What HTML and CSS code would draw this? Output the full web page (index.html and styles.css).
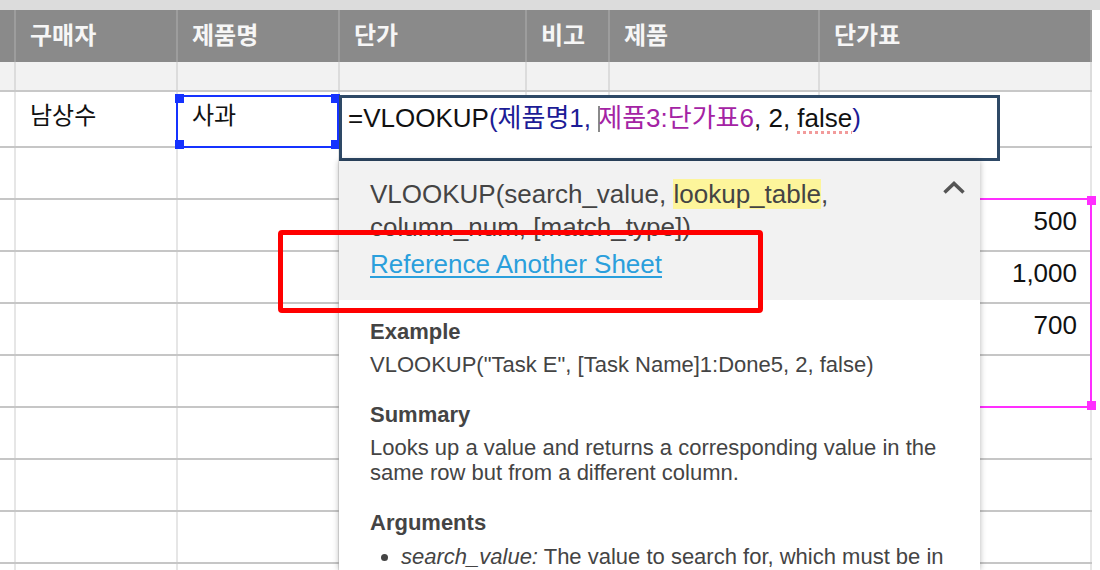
FILE: index.html
```html
<!DOCTYPE html>
<html lang="ko">
<head>
    <meta charset="UTF-8">
    <title>시트 - VLOOKUP</title>
    <link rel="stylesheet" href="styles.css">
</head>
<body>
    <div class="topbar"></div>

    <div class="sheet">
        <div class="row head">
            <div class="cell"></div>
            <div class="cell">구매자</div>
            <div class="cell">제품명</div>
            <div class="cell">단가</div>
            <div class="cell">비고</div>
            <div class="cell">제품</div>
            <div class="cell">단가표</div>
        </div>
        <div class="row sub">
            <div class="cell"></div><div class="cell"></div><div class="cell"></div><div class="cell"></div><div class="cell"></div><div class="cell"></div><div class="cell"></div>
        </div>
        <div class="row first">
            <div class="cell"></div>
            <div class="cell">남상수</div>
            <div class="cell selected">사과
                <span class="sel-frame">
                    <i class="handle tl"></i><i class="handle tr"></i><i class="handle bl"></i><i class="handle br"></i>
                </span>
            </div>
            <div class="cell"></div><div class="cell"></div><div class="cell"></div><div class="cell"></div>
        </div>
        <div class="row">
            <div class="cell"></div><div class="cell"></div><div class="cell"></div><div class="cell"></div><div class="cell"></div><div class="cell"></div><div class="cell"></div>
        </div>
        <div class="row">
            <div class="cell"></div><div class="cell"></div><div class="cell"></div><div class="cell"></div><div class="cell"></div><div class="cell"></div><div class="cell num">500</div>
        </div>
        <div class="row">
            <div class="cell"></div><div class="cell"></div><div class="cell"></div><div class="cell"></div><div class="cell"></div><div class="cell"></div><div class="cell num">1,000</div>
        </div>
        <div class="row">
            <div class="cell"></div><div class="cell"></div><div class="cell"></div><div class="cell"></div><div class="cell"></div><div class="cell"></div><div class="cell num">700</div>
        </div>
        <div class="row">
            <div class="cell"></div><div class="cell"></div><div class="cell"></div><div class="cell"></div><div class="cell"></div><div class="cell"></div><div class="cell"></div>
        </div>
        <div class="row">
            <div class="cell"></div><div class="cell"></div><div class="cell"></div><div class="cell"></div><div class="cell"></div><div class="cell"></div><div class="cell"></div>
        </div>
        <div class="row">
            <div class="cell"></div><div class="cell"></div><div class="cell"></div><div class="cell"></div><div class="cell"></div><div class="cell"></div><div class="cell"></div>
        </div>
        <div class="row">
            <div class="cell"></div><div class="cell"></div><div class="cell"></div><div class="cell"></div><div class="cell"></div><div class="cell"></div><div class="cell"></div>
        </div>
        <div class="row">
            <div class="cell"></div><div class="cell"></div><div class="cell"></div><div class="cell"></div><div class="cell"></div><div class="cell"></div><div class="cell"></div>
        </div>
        <div class="row">
            <div class="cell"></div><div class="cell"></div><div class="cell"></div><div class="cell"></div><div class="cell"></div><div class="cell"></div><div class="cell"></div>
        </div>

        <!-- referenced range 제품3:단가표6 -->
        <div class="range-box">
            <i class="handle rt"></i><i class="handle rb"></i>
        </div>

        <!-- in-cell formula editor -->
        <div class="formula-editor">=VLOOKUP<span class="ref-a">(제품명1, </span><span class="caret"></span><span class="ref-b">제품3:단가표6</span>, 2, <span class="misspelled">false</span><span class="ref-a">)</span></div>

        <!-- function help -->
        <div class="help-panel">
            <div class="help-top">
                <div class="signature">VLOOKUP(search_value, <mark>lookup_table</mark>, column_num, [match_type])</div>
                <svg class="collapse" width="24" height="14" viewBox="0 0 24 14">
                    <polyline points="2.5,11.5 12,2.5 21.5,11.5" fill="none" stroke="#555" stroke-width="3.5"/>
                </svg>
                <a class="sheet-link" href="#">Reference Another Sheet</a>
            </div>
            <div class="help-body">
                <h4>Example</h4>
                <p>VLOOKUP("Task E", [Task Name]1:Done5, 2, false)</p>
                <h4>Summary</h4>
                <p>Looks up a value and returns a corresponding value in the same row but from a different column.</p>
                <h4>Arguments</h4>
                <ul>
                    <li><em>search_value:</em> The value to search for, which must be in</li>
                </ul>
            </div>
        </div>

        <div class="callout"></div>
    </div>
</body>
</html>
```

FILE: styles.css
```css
* {
    margin: 0;
    padding: 0;
    box-sizing: border-box;
}

body {
    font-family: 'Liberation Sans', 'Noto Sans CJK KR', sans-serif;
    background: #ffffff;
    color: #111;
    width: 1100px;
    height: 570px;
    overflow: hidden;
}

.topbar {
    height: 10px;
    background: #dcdcdc;
}

.sheet {
    position: relative;
}

/* grid rows */
.row {
    display: grid;
    grid-template-columns: 16px 162px 162px 187px 83px 210px 272px;
    width: 1092px;
    height: 52px;
    border-bottom: 2px solid #c6c6c6;
}

.cell {
    border-right: 2px solid #e6e6e6;
    padding: 9px 14px 0;
    font-size: 24px;
    line-height: 28px;
    white-space: nowrap;
    min-width: 0;
}

/* row-number gutter */
.cell:first-child {
    padding: 0;
}

.row.head {
    height: 52px;
    background: #8a8a8a;
    border-bottom: none;
}

.row.head .cell {
    border-right-color: #9d9d9d;
    color: #f6f6f6;
    font-weight: bold;
    padding-top: 0;
    display: flex;
    align-items: center;
}

.row.sub {
    height: 30px;
    background: #f2f2f2;
    border-bottom-color: #c8c8c8;
}

.row.sub .cell {
    border-right-color: #dcdcdc;
}

.row.first {
    height: 56px;
}

.row.first .cell {
    padding-top: 10px;
}

.cell.num {
    text-align: right;
    padding-right: 13px;
    padding-top: 7px;
    font-size: 26px;
}

/* selected cell */
.cell.selected {
    position: relative;
}

.sel-frame {
    position: absolute;
    left: -2px;
    top: 3px;
    width: 163px;
    height: 53px;
    border: 2px solid #1532ff;
    z-index: 2;
}

.handle {
    position: absolute;
    width: 9px;
    height: 9px;
    background: #1532ff;
}

.sel-frame .tl { left: -3px; top: -3px; }
.sel-frame .tr { right: -3px; top: -3px; }
.sel-frame .bl { left: -3px; bottom: -3px; }
.sel-frame .br { right: -3px; bottom: -3px; }

/* referenced range */
.range-box {
    position: absolute;
    left: 818px;
    top: 188px;
    width: 274px;
    height: 210px;
    border: 2px solid #ff2eff;
    z-index: 3;
}

.range-box .handle {
    background: #ff2eff;
}

.range-box .rt { right: -6px; top: -4px; }
.range-box .rb { right: -6px; bottom: -4px; }

/* formula editor */
.formula-editor {
    position: absolute;
    left: 339px;
    top: 85px;
    width: 661px;
    height: 66px;
    border: 3px solid #2e4966;
    background: #fff;
    padding: 5px 6px;
    font-size: 26px;
    line-height: 30px;
    color: #111;
    white-space: nowrap;
    z-index: 4;
}

.ref-a {
    color: #1c1c96;
}

.ref-b {
    color: #a423a4;
}

.caret {
    display: inline-block;
    width: 2px;
    height: 26px;
    margin-right: -2px;
    vertical-align: -5px;
    background: #8a8a8a;
}

.misspelled {
    text-decoration: underline dotted #f29b9b;
    text-decoration-thickness: 3px;
    text-underline-offset: 4px;
}

/* function help panel */
.help-panel {
    position: absolute;
    left: 339px;
    top: 151px;
    width: 641px;
    height: 409px;
    overflow: hidden;
    background: #fff;
    box-shadow: 0 0 6px rgba(0, 0, 0, 0.3);
    color: #444;
    z-index: 5;
}

.help-top {
    position: relative;
    height: 139px;
    background: #f2f2f2;
    padding: 17px 60px 0 31px;
}

.signature {
    font-size: 26px;
    line-height: 33px;
}

.signature mark {
    background: #fdf59b;
    color: inherit;
}

.collapse {
    position: absolute;
    right: 14px;
    top: 20px;
}

.sheet-link {
    display: inline-block;
    margin-top: 4px;
    font-size: 26px;
    line-height: 33px;
    color: #2a9fdc;
    text-decoration: underline;
    text-decoration-thickness: 2px;
    text-underline-offset: 3px;
}

.help-body {
    padding: 19px 31px 0;
}

.help-body h4 {
    font-size: 22px;
    line-height: 26px;
    margin-bottom: 7px;
}

.help-body p {
    font-size: 22px;
    line-height: 25px;
    margin-bottom: 25px;
}

.help-body ul {
    padding-left: 31px;
    margin-top: 8px;
    font-size: 22px;
    line-height: 25px;
}

/* annotation box */
.callout {
    position: absolute;
    left: 278px;
    top: 220px;
    width: 485px;
    height: 83px;
    border: 5px solid #ff0000;
    border-radius: 4px;
    z-index: 6;
}
```
